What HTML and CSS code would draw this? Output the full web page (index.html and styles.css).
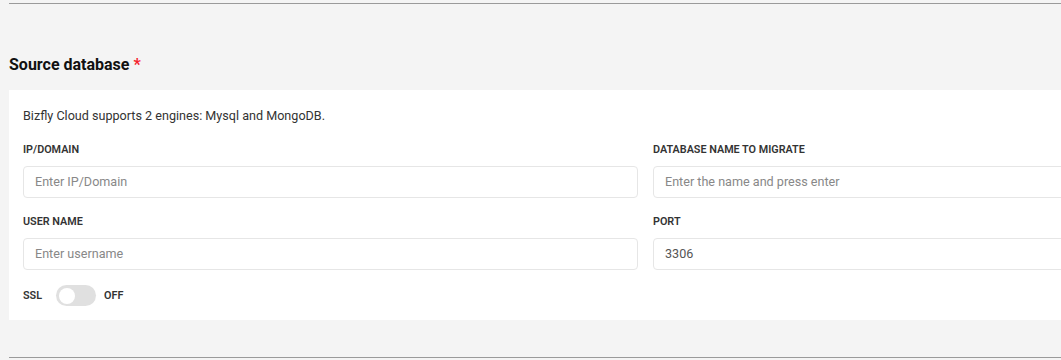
FILE: index.html
```html
<!DOCTYPE html>
<html lang="en">
<head>
    <meta charset="UTF-8">
    <meta name="viewport" content="width=device-width, initial-scale=1.0">
    <title>Source database</title>
    <link rel="stylesheet" href="styles.css">
</head>
<body>
    <div class="page">
        <hr class="divider top">

        <h2 class="section-title">Source database <span class="required">*</span></h2>

        <div class="card">
            <p class="note">Bizfly Cloud supports 2 engines: Mysql and MongoDB.</p>

            <div class="form-grid">
                <div class="field">
                    <label for="host">IP/DOMAIN</label>
                    <input type="text" id="host" placeholder="Enter IP/Domain">
                </div>
                <div class="field">
                    <label for="dbname">DATABASE NAME TO MIGRATE</label>
                    <input type="text" id="dbname" placeholder="Enter the name and press enter">
                </div>
                <div class="field">
                    <label for="user">USER NAME</label>
                    <input type="text" id="user" placeholder="Enter username">
                </div>
                <div class="field">
                    <label for="port">PORT</label>
                    <input type="text" id="port" value="3306">
                </div>
            </div>

            <div class="ssl-row">
                <span class="ssl-label">SSL</span>
                <span class="switch"><span class="knob"></span></span>
                <span class="switch-text">OFF</span>
            </div>
        </div>

        <hr class="divider bottom">
    </div>
</body>
</html>
```

FILE: styles.css
```css
html, body {
    overflow: hidden;
}

body {
    margin: 0;
    padding: 0;
    background: #f4f4f4;
    font-family: Roboto, "Liberation Sans", Arial, sans-serif;
    color: #333;
}

.page {
    width: 1290px;
    padding-left: 9px;
}

.divider {
    border: none;
    border-top: 1px solid #9a9a9a;
    margin: 0;
}

.divider.top {
    margin-top: 3px;
}

.divider.bottom {
    margin-top: 37px;
}

.section-title {
    margin: 51px 0 15px;
    font-size: 16px;
    line-height: 20px;
    font-weight: 700;
    color: #111;
}

.required {
    color: #f5222d;
}

.card {
    background: #fff;
    padding: 16px 14px 14px;
}

.note {
    margin: 0 0 15px;
    font-size: 12.6px;
    line-height: 20px;
    color: #333;
}

.form-grid {
    display: grid;
    grid-template-columns: 615px 615px;
    column-gap: 15px;
    row-gap: 15px;
}

.field label {
    display: block;
    font-size: 10.8px;
    line-height: 16px;
    font-weight: 600;
    color: #333;
    margin: 1px 0 8px;
}

.field input {
    display: block;
    box-sizing: border-box;
    width: 100%;
    height: 32px;
    padding: 0 11px 1px;
    border: 1px solid #e6e6e6;
    border-radius: 4px;
    font-family: inherit;
    font-size: 12.6px;
    color: #555;
    background: #fff;
}

.field input::placeholder {
    color: #888;
}

.ssl-row {
    display: flex;
    align-items: center;
    margin-top: 15px;
    height: 21px;
    font-size: 10.8px;
    font-weight: 600;
    color: #333;
}

.switch {
    display: inline-flex;
    align-items: center;
    box-sizing: border-box;
    width: 40px;
    height: 21px;
    margin: 0 8px 0 14px;
    padding: 0 3px;
    border-radius: 11px;
    background: #e0e0e0;
}

.knob {
    width: 16px;
    height: 16px;
    border-radius: 50%;
    background: #fff;
}
```
